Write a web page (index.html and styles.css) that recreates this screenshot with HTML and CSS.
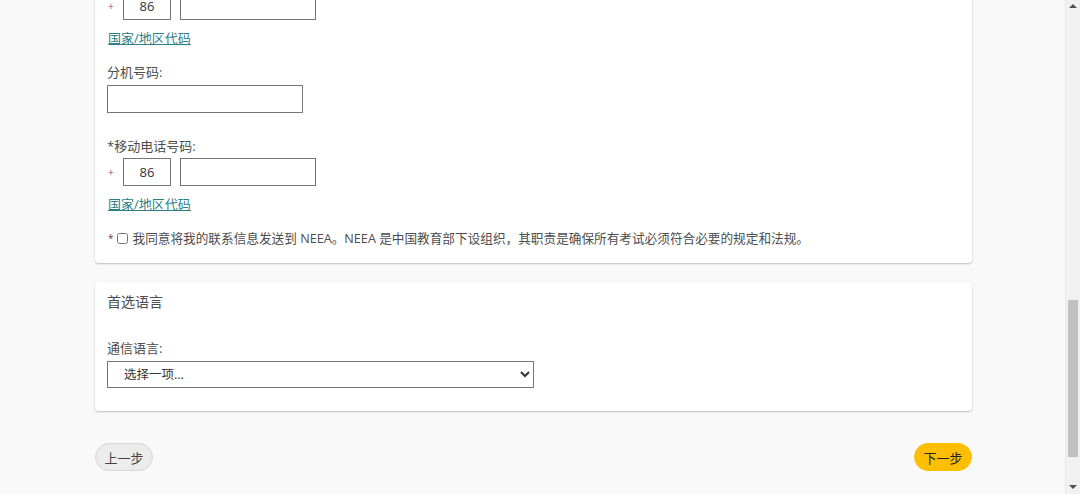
FILE: index.html
```html
<!DOCTYPE html>
<html lang="zh">
<head>
<meta charset="utf-8">
<title>联系信息</title>
<link rel="stylesheet" href="styles.css">
</head>
<body>
<div class="page">
  <section class="card card-cut">
    <div class="phone-row">
      <span class="plus">+</span>
      <input class="cc" type="text" value="86">
      <input class="num" type="text">
    </div>
    <a class="link" href="#">国家/地区代码</a>

    <div class="field field-ext">
      <label class="label">分机号码:</label>
      <input class="ext" type="text">
    </div>

    <div class="field field-mobile">
      <label class="label">*移动电话号码:</label>
      <div class="phone-row">
        <span class="plus">+</span>
        <input class="cc" type="text" value="86">
        <input class="num" type="text">
      </div>
    </div>
    <a class="link" href="#">国家/地区代码</a>

    <div class="consent">
      <span class="star">*</span>
      <input class="check" type="checkbox">
      <span class="consent-text">我同意将我的联系信息发送到 NEEA。NEEA 是中国教育部下设组织，其职责是确保所有考试必须符合必要的规定和法规。</span>
    </div>
  </section>

  <section class="card card-lang">
    <h2 class="card-title">首选语言</h2>
    <div class="field field-lang">
      <label class="label">通信语言:</label>
      <select class="select">
        <option>选择一项...</option>
      </select>
    </div>
  </section>

  <div class="nav">
    <button class="btn btn-prev">上一步</button>
    <button class="btn btn-next">下一步</button>
  </div>
</div>

<div class="scrollbar">
  <span class="arrow arrow-up"></span>
  <span class="thumb"></span>
  <span class="arrow arrow-down"></span>
</div>
</body>
</html>
```

FILE: styles.css
```css
html, body {
  margin: 0;
  padding: 0;
  height: 494px;
  overflow: hidden;
  background: #f9f9f9;
}

body {
  font-family: "Open Sans", "Noto Sans CJK SC", "Noto Sans", sans-serif;
  color: #4d4d4d;
  font-size: 13px;
}

.page {
  width: 877px;
  padding-left: 95px;
  display: flex;
  flex-direction: column;
}

.card {
  background: #fff;
  border-radius: 4px;
  box-shadow: 0 1px 2px rgba(0, 0, 0, 0.25);
  padding: 12px 12px 16px 12px;
  display: flex;
  flex-direction: column;
  align-items: flex-start;
}

.card-cut {
  margin-top: -20px;
}

.phone-row {
  display: flex;
  align-items: center;
  height: 28px;
}

.plus {
  color: #7d4a9a;
  font-size: 10px;
  width: 16px;
  padding-left: 1px;
  box-sizing: border-box;
}

input[type="text"] {
  box-sizing: border-box;
  height: 28px;
  border: 1px solid #767676;
  border-radius: 0;
  font-family: "Open Sans", "Liberation Sans", sans-serif;
  font-size: 13px;
  color: #333;
  margin: 0;
  padding: 0 6px;
  background: #fff;
}

.cc {
  width: 48px;
  text-align: center;
}

.num {
  width: 136px;
  margin-left: 9px !important;
}

.ext {
  width: 196px;
  margin-top: 4px !important;
}

.link {
  display: block;
  height: 18px;
  overflow: hidden;
  color: #2c7d85;
  text-decoration: underline;
  line-height: 18px;
  margin-top: 9px;
  margin-left: 1px;
}

.field {
  display: flex;
  flex-direction: column;
  align-items: flex-start;
}

.label {
  display: block;
  height: 18px;
  line-height: 18px;
  color: #4d4d4d;
}

.field-ext {
  margin-top: 16px;
}

.field-mobile {
  margin-top: 24px;
}

.field-mobile .phone-row {
  margin-top: 3px;
}

.consent {
  margin-top: 16px;
  display: flex;
  align-items: center;
  height: 18px;
  line-height: 18px;
  font-size: 12.65px;
  color: #4d4d4d;
}

.star {
  font-size: 10px;
  margin-left: 1px;
  margin-right: 3px;
}

.check {
  width: 11px;
  height: 11px;
  margin: 0 5px 0 0;
}

.card-lang {
  margin-top: 19px;
  padding: 10px 12px 23px 12px;
}

.card-title {
  margin: 0;
  height: 20px;
  font-size: 14px;
  font-weight: normal;
  line-height: 20px;
  color: #4d4d4d;
}

.field-lang {
  margin-top: 27px;
}

.select {
  margin-top: 4px;
  width: 427px;
  height: 27px;
  box-sizing: border-box;
  border: 1px solid #767676;
  border-radius: 0;
  background: #fff;
  font-family: "Open Sans", "Noto Sans CJK SC", sans-serif;
  font-size: 12.5px;
  color: #333;
  padding-left: 12px;
}

.nav {
  margin-top: 32px;
  display: flex;
  justify-content: space-between;
}

.btn {
  height: 28px;
  width: 58px;
  border-radius: 14px;
  font-family: "Open Sans", "Noto Sans CJK SC", sans-serif;
  font-size: 13px;
  padding: 0;
  cursor: pointer;
}

.btn-prev {
  background: #ececec;
  border: 1px solid #d6d6d6;
  color: #444;
}

.btn-next {
  background: #ffbe00;
  border: 1px solid #ffbe00;
  color: #222;
}

.scrollbar {
  position: fixed;
  top: 0;
  right: 0;
  width: 15px;
  height: 494px;
  background: #f1f1f1;
  border-left: 1px solid #e8e8e8;
  box-sizing: border-box;
}

.thumb {
  position: absolute;
  left: 2px;
  width: 10px;
  top: 300px;
  height: 157px;
  background: #c1c1c1;
}

.arrow {
  position: absolute;
  left: 3px;
  width: 0;
  height: 0;
  border-left: 4px solid transparent;
  border-right: 4px solid transparent;
}

.arrow-up {
  top: 4px;
  border-bottom: 4px solid #505050;
}

.arrow-down {
  bottom: 5px;
  border-top: 4px solid #505050;
}
```
